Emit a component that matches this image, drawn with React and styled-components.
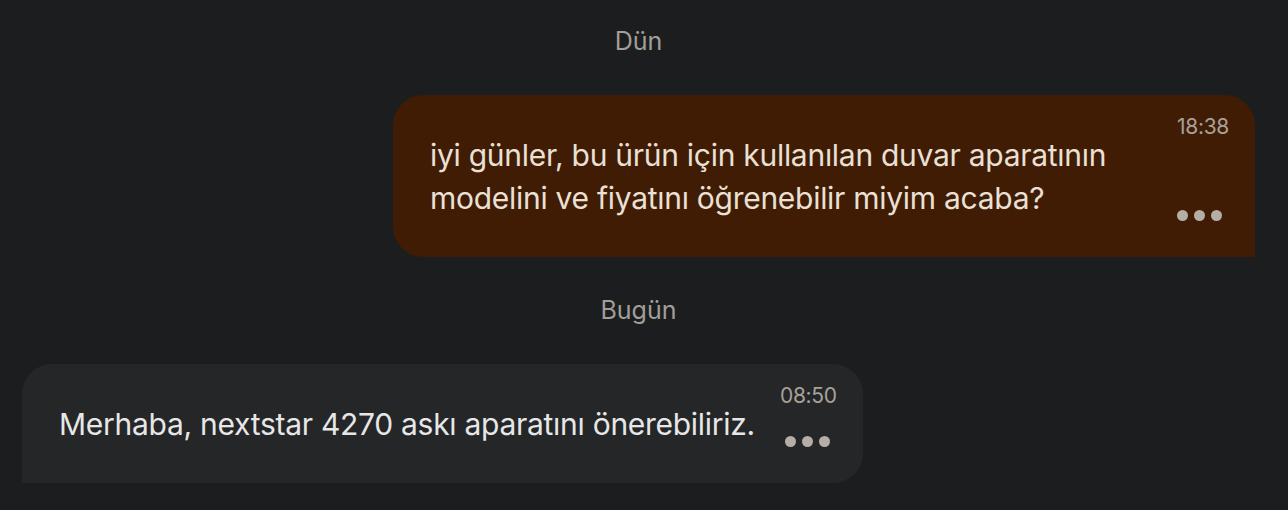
import React from 'react';
import styled, { createGlobalStyle } from 'styled-components';

const GlobalStyle = createGlobalStyle`
  html, body {
    margin: 0;
    background: #1c1d1f;
  }
  body {
    font-family: Inter, "Noto Sans", sans-serif;
    -webkit-font-smoothing: antialiased;
  }
`;

const Thread = styled.div`
  display: flex;
  flex-direction: column;
  padding: 26px 33px 28px 22px;
`;

const DayLabel = styled.div`
  align-self: center;
  font-size: 25px;
  line-height: 30px;
  color: #a29e98;
  margin-bottom: 39px;
`;

const Bubble = styled.div`
  display: flex;
  align-items: stretch;
  gap: 25px;
  max-width: 862px;
  box-sizing: border-box;
  padding: 19px 26px 36px 37px;
  align-self: ${(p) => (p.$mine ? 'flex-end' : 'flex-start')};
  background: ${(p) => (p.$mine ? '#3f1c03' : '#252628')};
  border-radius: ${(p) => (p.$mine ? '30px 30px 0 30px' : '30px 30px 30px 0')};
  margin-bottom: ${(p) => (p.$mine ? '38px' : '0')};
`;

const Body = styled.div`
  align-self: center;
  margin: 20px 0 1px;
  font-size: 30px;
  line-height: 43px;
  letter-spacing: -0.28px;
  color: ${(p) => (p.$mine ? '#eae0d6' : '#e7e7e7')};
`;

const Meta = styled.div`
  display: flex;
  flex-direction: column;
  align-items: flex-end;
  justify-content: space-between;
  flex-shrink: 0;
`;

const Time = styled.span`
  font-size: 21px;
  line-height: 26px;
  letter-spacing: -0.3px;
  color: #a8a199;
`;

const Dots = styled.div`
  display: flex;
  gap: 6px;
  margin-right: 7px;
  span {
    width: 11px;
    height: 11px;
    border-radius: 50%;
    background: #b5aea6;
  }
`;

function Message({ mine, time, children }) {
  return (
    <Bubble $mine={mine}>
      <Body $mine={mine}>{children}</Body>
      <Meta>
        <Time>{time}</Time>
        <Dots>
          <span />
          <span />
          <span />
        </Dots>
      </Meta>
    </Bubble>
  );
}

export default function App() {
  return (
    <>
      <GlobalStyle />
      <Thread>
        <DayLabel>Dün</DayLabel>
        <Message mine time='18:38'>
          iyi günler, bu ürün için kullanılan duvar aparatının modelini ve fiyatını
          öğrenebilir miyim acaba?
        </Message>
        <DayLabel>Bugün</DayLabel>
        <Message time='08:50'>
          Merhaba, nextstar 4270 askı aparatını önerebiliriz.
        </Message>
      </Thread>
    </>
  );
}
